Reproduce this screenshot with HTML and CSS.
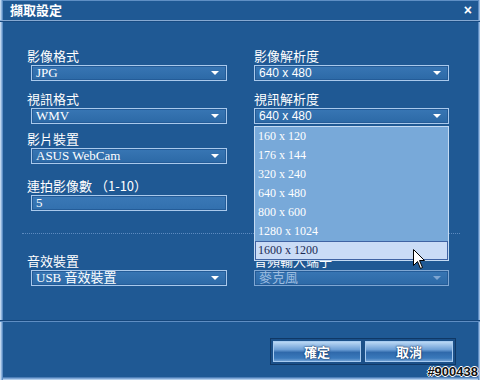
FILE: index.html
```html
<!DOCTYPE html>
<html lang="zh-Hant">
<head>
  <meta charset="UTF-8" />
  <title>擷取設定</title>
  <link rel="stylesheet" href="styles.css">
</head>
<body>
<div class="dialog">
  <div class="titlebar">
    <span class="title">擷取設定</span>
    <span class="close">×</span>
  </div>

  <div class="grid">
    <div class="field">
      <label class="lbl left">影像格式</label>
      <div class="select serif">JPG<i class="arrow"></i></div>
    </div>
    <div class="field">
      <label class="lbl">影像解析度</label>
      <div class="select sans">640 x 480<i class="arrow"></i></div>
    </div>

    <div class="field">
      <label class="lbl left">視訊格式</label>
      <div class="select serif">WMV<i class="arrow"></i></div>
    </div>
    <div class="field">
      <label class="lbl">視訊解析度</label>
      <div class="select sans open">640 x 480<i class="arrow"></i>
        <!-- open dropdown list, drawn over the fields below -->
        <ul class="list">
          <li>160 x 120</li>
          <li>176 x 144</li>
          <li>320 x 240</li>
          <li>640 x 480</li>
          <li>800 x 600</li>
          <li>1280 x 1024</li>
          <li class="hover">1600 x 1200</li>
        </ul>
      </div>
    </div>

    <div class="field">
      <label class="lbl left">影片裝置</label>
      <div class="select serif">ASUS WebCam<i class="arrow"></i></div>
    </div>
    <div class="field"></div>

    <div class="field">
      <label class="lbl left">連拍影像數 （1-10）</label>
      <div class="select input serif">5</div>
    </div>
    <div class="field"></div>
  </div>

  <div class="dots"></div>

  <div class="grid audio">
    <div class="field">
      <label class="lbl left">音效裝置</label>
      <div class="select serif">USB 音效裝置<i class="arrow"></i></div>
    </div>
    <div class="field">
      <label class="lbl">音頻輸入端子</label>
      <div class="select serif disabled">麥克風<i class="arrow"></i></div>
    </div>
  </div>

  <div class="rule"></div>

  <div class="footer">
    <div class="btns">
      <button class="btn">確定</button>
      <button class="btn">取消</button>
    </div>
  </div>

  <svg class="cursor" width="13" height="21" viewBox="0 0 13 21">
    <path d="M0.5 0.5 L0.5 16.5 L4.5 12.5 L7.5 19.5 L9.5 18.5 L6.5 11.5 L11.5 11.5 Z" fill="#fff" stroke="#000" stroke-width="1"/>
  </svg>
  <div class="badge">#900438</div>
</div>
</body>
</html>
```

FILE: styles.css
```css
body {
  margin: 0;
  background: #fff;
}
.dialog {
  position: relative;
  width: 480px;
  height: 380px;
  overflow: hidden;
  background: #1f5994;
  font-family: "Noto Sans CJK TC", "Liberation Sans", sans-serif;
  font-size: 13px;
  color: #fff;
  box-shadow:
    inset 1px 0 #c2d8f0,
    inset 2px 0 #8fb4dd,
    inset 3px 0 #5f8fc4,
    inset -1px 0 #9bbde3,
    inset -2px 0 #5d8cc2,
    inset 0 -1px #b4cfec,
    inset 0 -2px #7ea6d4,
    inset 0 -3px #4f80b8,
    inset 0 1px #5f8fc4;
}

/* title bar */
.titlebar {
  height: 20px;
  display: flex;
  align-items: center;
  justify-content: space-between;
  padding: 0 8px 0 10px;
  border-bottom: 1px solid #86a9d2;
  box-shadow: 0 1px #184b82;
}
.title {
  font-weight: bold;
  font-size: 13px;
  line-height: 20px;
}
.close {
  font-family: "Liberation Sans", sans-serif;
  font-weight: bold;
  font-size: 14px;
  line-height: 20px;
}

/* two column form */
.grid {
  display: grid;
  grid-template-columns: 196px 195px;
  grid-template-rows: 33px 43px 40px 47px;
  column-gap: 27px;
  padding: 27px 0 0 31px;
}
.grid.audio {
  grid-template-rows: 33px;
  padding-top: 19px;
}
.field {
  display: flex;
  flex-direction: column;
  justify-content: flex-end;
}
.lbl {
  height: 17px;
  line-height: 16px;
  white-space: nowrap;
}
.lbl.left {
  margin-left: -4px;
}

.select {
  position: relative;
  height: 16px;
  box-sizing: border-box;
  border: 1px solid #a9c9ec;
  background: linear-gradient(#3876b4, #2c69a6);
  box-shadow: inset 0 0 0 1px #245c98;
  padding-left: 4px;
  line-height: 14px;
  font-size: 13px;
  white-space: nowrap;
}
.serif {
  font-family: "Liberation Serif", "Noto Sans CJK TC", serif;
}
.sans {
  font-family: "Liberation Sans", "Noto Sans CJK TC", sans-serif;
  font-size: 12px;
}
.select.input {
  background: linear-gradient(#3a78b6, #3270ae);
}
.select.disabled {
  color: #9dbde0;
  border-color: #7fa7d3;
}
.arrow {
  position: absolute;
  right: 7px;
  top: 5px;
  width: 0;
  height: 0;
  border-left: 4px solid transparent;
  border-right: 4px solid transparent;
  border-top: 4px solid #fff;
}
.disabled .arrow {
  border-top-color: #7fa6d2;
}

/* open list of the video resolution box */
.list {
  position: absolute;
  left: -1px;
  top: 16px;
  width: 195px;
  margin: 1px 0 0;
  padding: 0;
  list-style: none;
  background: #78a9d9;
  border: 1px solid #c4dbf3;
  box-sizing: border-box;
  z-index: 2;
  font-family: "Liberation Serif", serif;
  font-size: 12px;
}
.list li {
  height: 19px;
  line-height: 18px;
  padding-left: 3px;
  color: #fff;
}
.list li.hover {
  background: #cadcf6;
  color: #1b2b55;
  box-shadow: inset 0 0 0 1px #3f63a3;
}

.dots {
  margin: 22px 20px 0 22px;
  height: 0;
  border-top: 1px dotted #5d8bc0;
}

.rule {
  margin-top: 34px;
  height: 0;
  border-top: 1px solid #15467b;
  border-bottom: 1px solid #5f8ec3;
}

.footer {
  display: flex;
  justify-content: flex-end;
  padding: 16px 24px 0 0;
}
.btns {
  display: flex;
  gap: 4px;
  padding: 2px;
  border: 1px solid #103865;
  background: #1b5089;
}
.btn {
  width: 88px;
  height: 21px;
  padding: 0;
  border: 1px solid #a7cbf0;
  background: linear-gradient(#b9d7f4 0%, #6d9fd6 40%, #2f69ab 55%, #3a79bb 85%, #6f9fd3 100%);
  color: #fff;
  font-family: "Noto Sans CJK TC", sans-serif;
  font-weight: bold;
  font-size: 13px;
  line-height: 18px;
  text-shadow: 0 0 2px #0d2f5c, 0 0 1px #0d2f5c;
  cursor: pointer;
}

.cursor {
  position: absolute;
  left: 413px;
  top: 249px;
  z-index: 3;
}
.badge {
  position: absolute;
  right: 2px;
  bottom: 1px;
  font-family: "Liberation Sans", sans-serif;
  font-weight: bold;
  font-size: 13px;
  line-height: 15px;
  color: #111;
  text-shadow: 1px 0 #fff, -1px 0 #fff, 0 1px #fff, 0 -1px #fff;
  z-index: 3;
}
```
